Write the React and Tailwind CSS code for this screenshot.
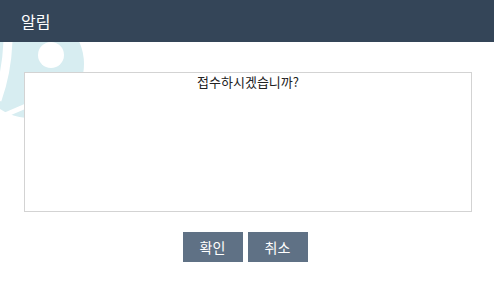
export default function App() {
  const font = { fontFamily: '"Malgun Gothic", "Noto Sans CJK KR", "Noto Sans", sans-serif' };
  return (
    <div className="relative w-[494px] h-[292px] bg-white overflow-hidden" style={font}>
      <div className="h-[42px] bg-[#344558] flex items-center px-[21px]">
        <span className="text-white text-[16px] leading-none">알림</span>
      </div>
      <svg className="absolute left-0 top-[42px]" width="100" height="90" viewBox="0 0 100 90">
        <circle cx="30" cy="22" r="54" fill="#d7edf1" />
        <path d="M8 -2 Q 7 30 -3 58" stroke="#ffffff" strokeWidth="9" fill="none" />
        <path d="M-2 76 L 26 64" stroke="#ffffff" strokeWidth="5" fill="none" />
        <circle cx="51" cy="13" r="13" fill="#ffffff" />
      </svg>
      <div className="relative pt-[30px] px-[24px]">
        <div className="w-[448px] h-[140px] border border-[#d3d3d3] bg-white text-center text-[13px] leading-[17px] text-[#222]">
          접수하시겠습니까?
        </div>
        <div className="flex justify-center gap-[5px] mt-[20px] pr-[4px]">
          <button className="w-[60px] h-[30px] bg-[#5f7185] text-white text-[14px]">확인</button>
          <button className="w-[60px] h-[30px] bg-[#5f7185] text-white text-[14px]">취소</button>
        </div>
      </div>
    </div>
  );
}
